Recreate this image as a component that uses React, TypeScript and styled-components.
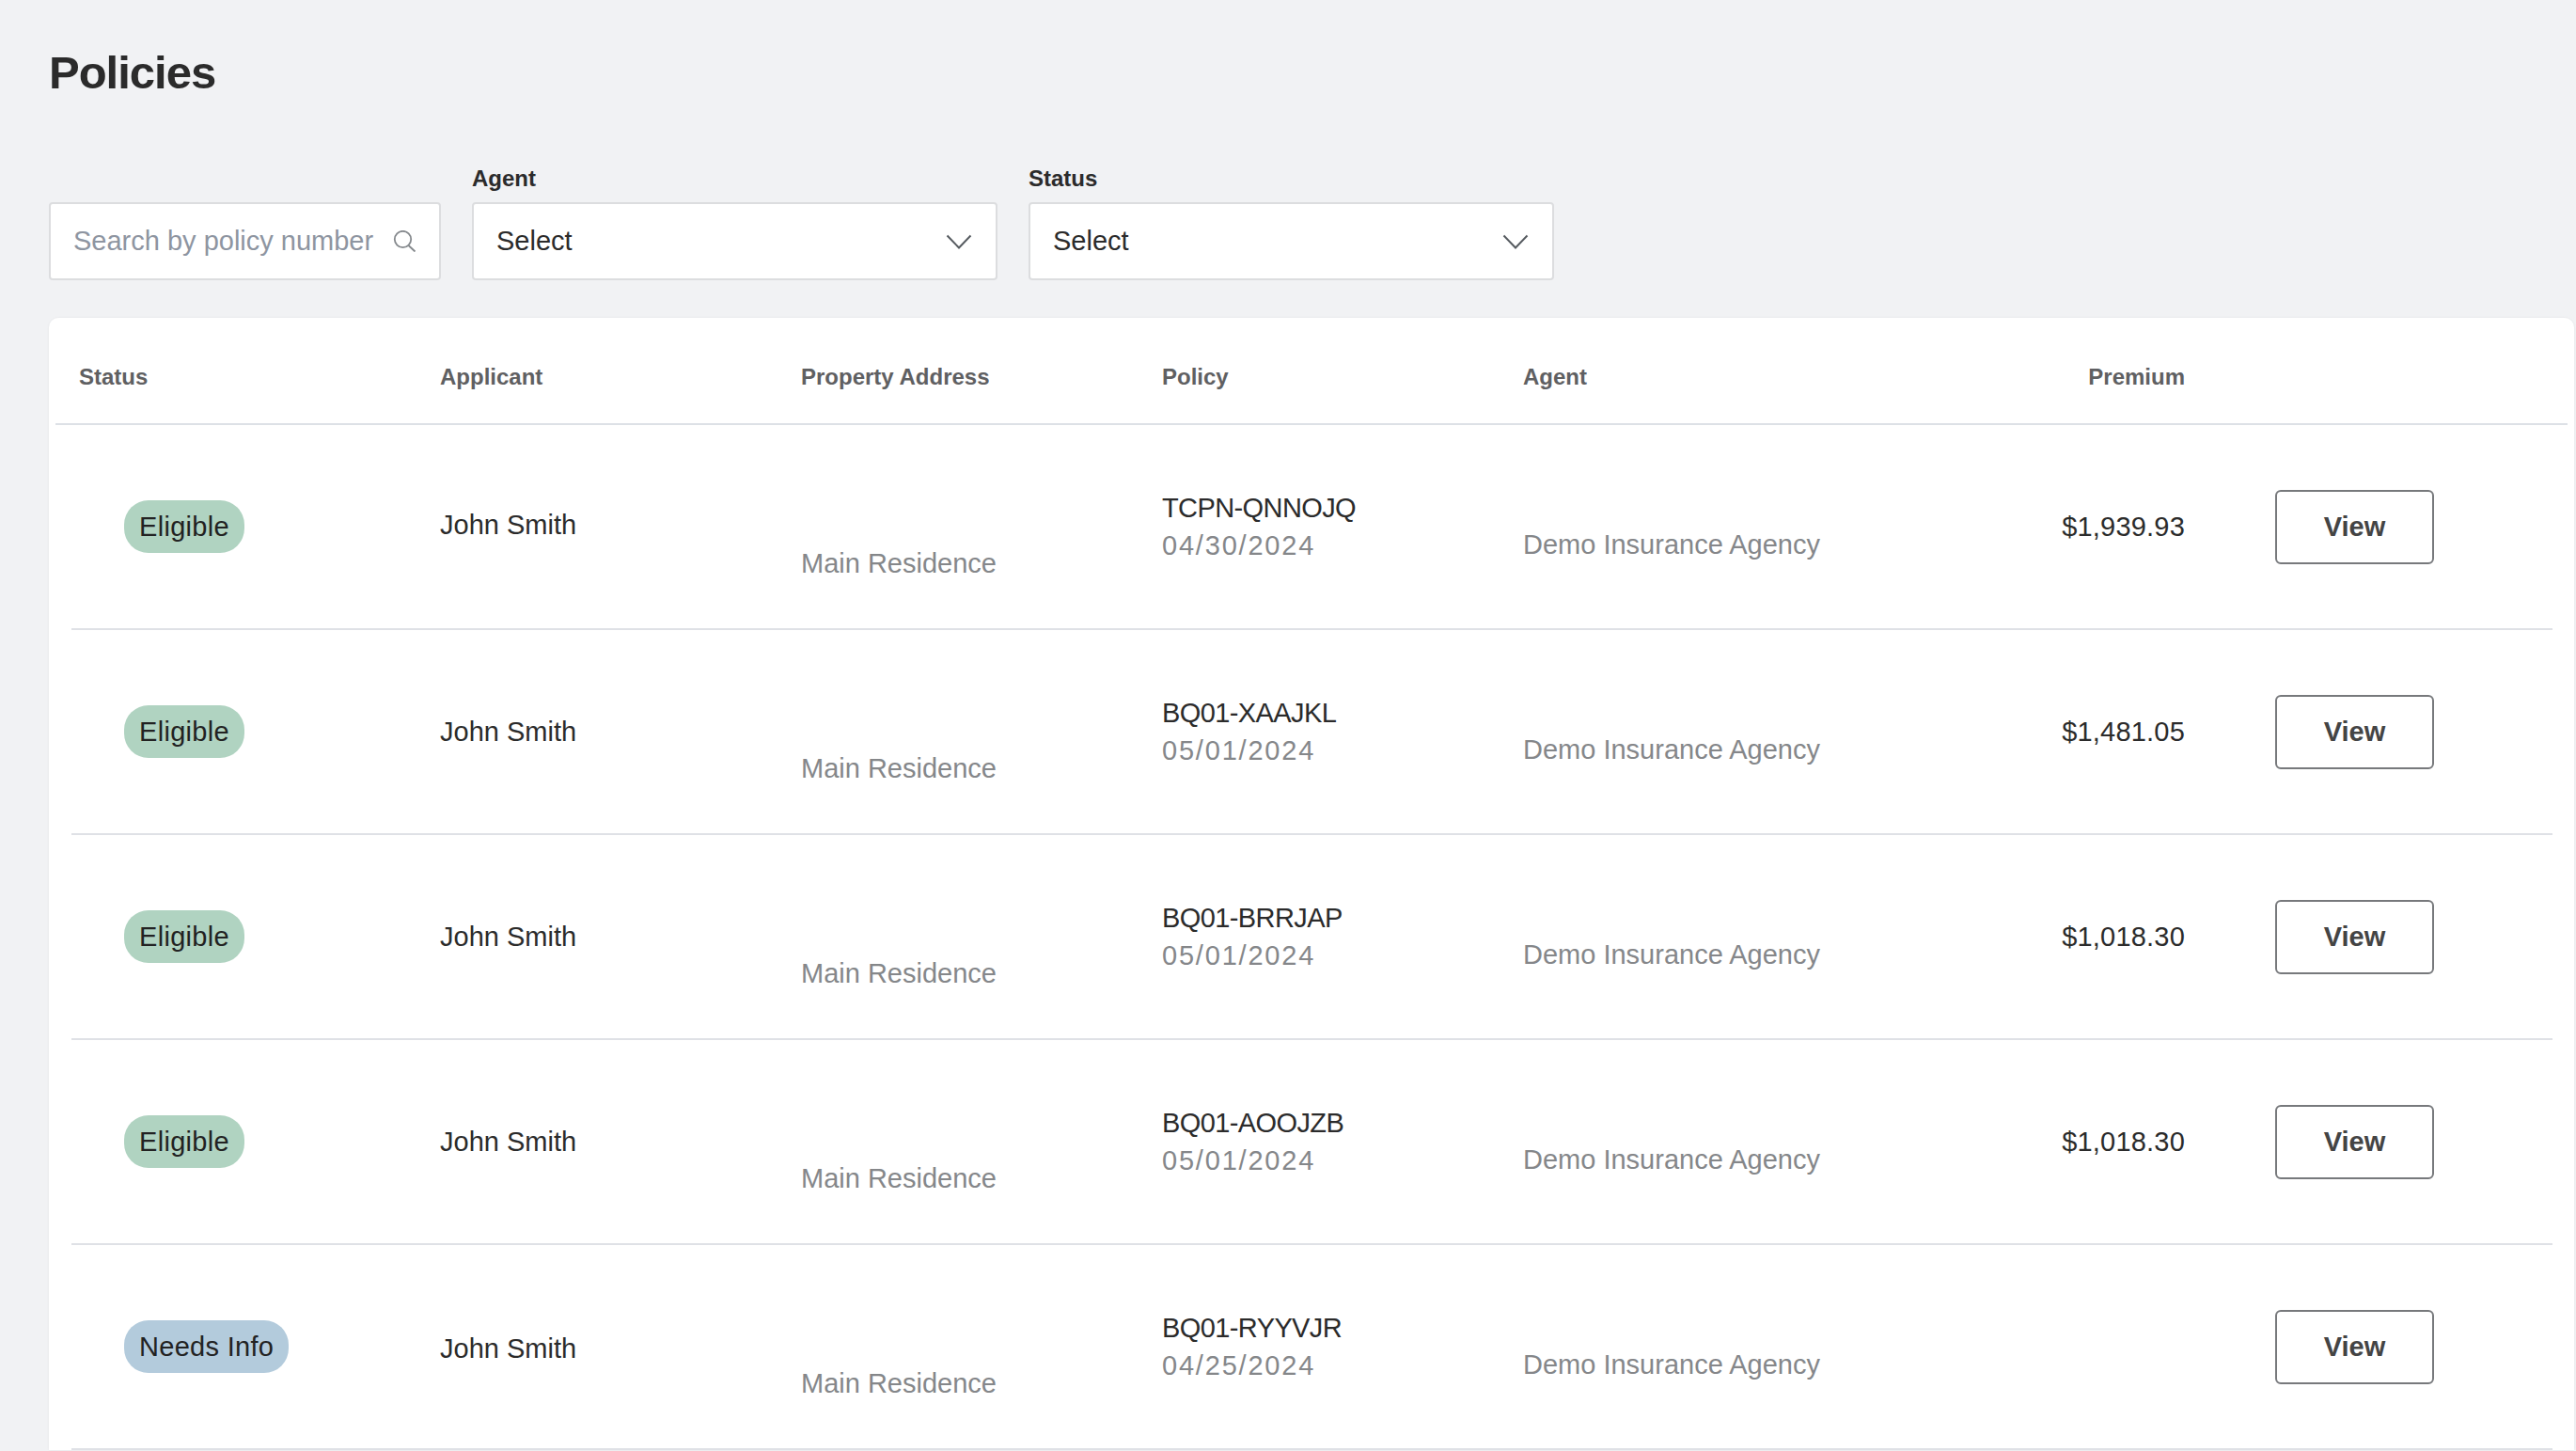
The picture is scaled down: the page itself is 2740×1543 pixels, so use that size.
import styled, { createGlobalStyle } from "styled-components";

interface IPolicy {
  status: "Eligible" | "Needs Info";
  number: string;
  date: string;
  premium?: string;
  nameNudge?: number;
}

const policies: IPolicy[] = [
  { status: "Eligible", number: "TCPN-QNNOJQ", date: "04/30/2024", premium: "$1,939.93", nameNudge: -3 },
  { status: "Eligible", number: "BQ01-XAAJKL", date: "05/01/2024", premium: "$1,481.05" },
  { status: "Eligible", number: "BQ01-BRRJAP", date: "05/01/2024", premium: "$1,018.30" },
  { status: "Eligible", number: "BQ01-AOOJZB", date: "05/01/2024", premium: "$1,018.30" },
  { status: "Needs Info", number: "BQ01-RYYVJR", date: "04/25/2024", nameNudge: 4 },
];

const FONT = `"Liberation Sans", Arial, sans-serif`;
const COLUMNS = "384px 384px 384px 384px 384px 320px 1fr";

const Chevron = () => (
  <svg width="28" height="16" viewBox="0 0 28 16" fill="none">
    <path d="M1.5 1.5 L14 14.5 L26.5 1.5" stroke="#555a5f" strokeWidth="2" />
  </svg>
);

const SearchIcon = () => (
  <svg width="25" height="23" viewBox="0 0 25 23" fill="none">
    <circle cx="10.5" cy="9.5" r="8.7" stroke="#85898d" strokeWidth="1.8" />
    <path d="M16.5 16 L23.5 22.5" stroke="#85898d" strokeWidth="1.9" />
  </svg>
);

const App = () => {
  return (
    <Page>
      <GlobalStyle />
      <Title>Policies</Title>
      <Filters>
        <SearchBox>
          <SearchInput placeholder="Search by policy number" />
          <SearchIcon />
        </SearchBox>
        <Field>
          <FieldLabel>Agent</FieldLabel>
          <SelectBox>
            Select
            <Chevron />
          </SelectBox>
        </Field>
        <Field>
          <FieldLabel>Status</FieldLabel>
          <SelectBox>
            Select
            <Chevron />
          </SelectBox>
        </Field>
      </Filters>
      <Card>
        <HeaderRow>
          <span>Status</span>
          <span>Applicant</span>
          <span>Property Address</span>
          <span>Policy</span>
          <span>Agent</span>
          <PremiumHead>Premium</PremiumHead>
        </HeaderRow>
        {policies.map((policy) => (
          <Row key={policy.number}>
            <div>
              <Pill $status={policy.status}>{policy.status}</Pill>
            </div>
            <Applicant $nudge={policy.nameNudge ?? 0}>John Smith</Applicant>
            <Muted $blank={77}>Main Residence</Muted>
            <div>
              <PolicyNumber>{policy.number}</PolicyNumber>
              <PolicyDate>{policy.date}</PolicyDate>
            </div>
            <Muted $blank={38}>Demo Insurance Agency</Muted>
            <Premium>{policy.premium}</Premium>
            <div>
              <ViewButton>View</ViewButton>
            </div>
          </Row>
        ))}
      </Card>
    </Page>
  );
};

export default App;

const GlobalStyle = createGlobalStyle`
  html, body {
    margin: 0;
    padding: 0;
    background-color: #f1f2f4;
  }
  * {
    box-sizing: border-box;
  }
`;
const Page = styled.div`
  height: 1543px;
  overflow: hidden;
  padding: 46px 2px 0 52px;
  font-family: ${FONT};
  background-color: #f1f2f4;
`;
const Title = styled.h1`
  margin: 0;
  font-size: 49px;
  line-height: 62px;
  font-weight: 700;
  letter-spacing: -1px;
  color: #2b2b2b;
`;
const Filters = styled.div`
  display: flex;
  align-items: flex-end;
  gap: 33px;
  margin-top: 67px;
`;
const Field = styled.div`
  display: flex;
  flex-direction: column;
  gap: 10px;
  width: 559px;
`;
const FieldLabel = styled.label`
  font-size: 24px;
  line-height: 30px;
  font-weight: 700;
  color: #2b2b2b;
`;
const SearchBox = styled.div`
  display: flex;
  align-items: center;
  justify-content: space-between;
  width: 417px;
  height: 83px;
  padding: 0 24px 0 24px;
  background-color: #fff;
  border: 2px solid #dcdddf;
  border-radius: 4px;
`;
const SearchInput = styled.input`
  width: 330px;
  padding: 0;
  border: none;
  outline: none;
  font-family: ${FONT};
  font-size: 29px;
  color: #2b2b2b;
  &::placeholder {
    color: #8e95a1;
    opacity: 1;
  }
`;
const SelectBox = styled.div`
  display: flex;
  align-items: center;
  justify-content: space-between;
  height: 83px;
  padding: 0 25px 0 24px;
  font-size: 29px;
  color: #2b2b2b;
  background-color: #fff;
  border: 2px solid #dcdddf;
  border-radius: 4px;
`;
const Card = styled.div`
  margin-top: 40px;
  background-color: #fff;
  border-radius: 10px 10px 0 0;
  box-shadow: 0 0 3px rgba(0, 0, 0, 0.06);
`;
const HeaderRow = styled.div`
  display: grid;
  grid-template-columns: ${COLUMNS};
  align-items: center;
  height: 114px;
  margin: 0 7px;
  padding: 13px 0 0 25px;
  font-size: 24px;
  font-weight: 700;
  color: #5f6062;
  border-bottom: 2px solid #dde1e6;
`;
const PremiumHead = styled.span`
  text-align: right;
`;
const Row = styled.div`
  display: grid;
  grid-template-columns: ${COLUMNS};
  align-items: center;
  height: 218px;
  margin: 0 23px 0 24px;
  padding-left: 8px;
  border-bottom: 2px solid #dfe1e6;
`;
const Pill = styled.span<{ $status: IPolicy["status"] }>`
  display: inline-block;
  margin-left: 48px;
  height: 56px;
  padding: 0 16px;
  font-size: 29px;
  line-height: 56px;
  letter-spacing: 0.3px;
  color: #222;
  border-radius: 26px;
  background-color: ${(props) => (props.$status === "Eligible" ? "#b0d3c1" : "#b3cbdc")};
`;
const Applicant = styled.div<{ $nudge: number }>`
  margin-top: ${(props) => props.$nudge}px;
  font-size: 29px;
  color: #2b2b2b;
`;
const Muted = styled.div<{ $blank: number }>`
  padding-top: ${(props) => props.$blank}px;
  font-size: 29px;
  line-height: 40px;
  color: #85878a;
`;
const PolicyNumber = styled.div`
  font-size: 29px;
  line-height: 40px;
  letter-spacing: -0.6px;
  color: #2b2b2b;
`;
const PolicyDate = styled.div`
  font-size: 29px;
  line-height: 40px;
  letter-spacing: 1.8px;
  color: #85878a;
`;
const Premium = styled.div`
  font-size: 29px;
  letter-spacing: 0.2px;
  text-align: right;
  color: #2b2b2b;
`;
const ViewButton = styled.button`
  display: block;
  width: 169px;
  height: 79px;
  margin-left: 96px;
  padding: 0;
  font-family: ${FONT};
  font-size: 29px;
  font-weight: 700;
  color: #444;
  background-color: #fff;
  border: 2px solid #77797c;
  border-radius: 6px;
`;
